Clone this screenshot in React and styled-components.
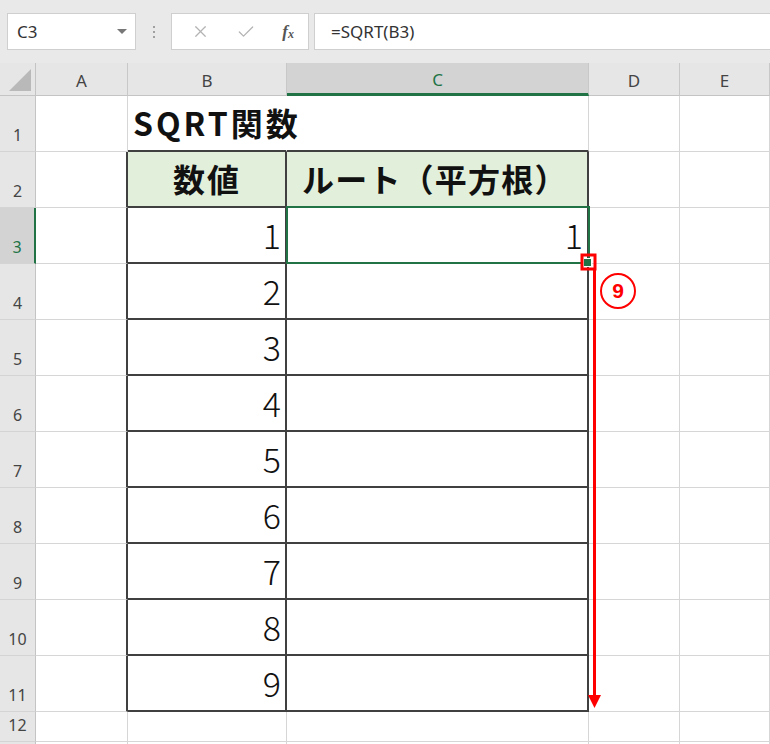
import React from "react";
import styled, { createGlobalStyle } from "styled-components";
import { X, Check } from "lucide-react";

const GlobalStyle = createGlobalStyle`
  html, body {
    margin: 0;
    padding: 0;
    width: 770px;
    height: 744px;
    overflow: hidden;
    background: #ffffff;
    font-family: "Noto Sans", "Open Sans", sans-serif;
  }
`;

const GREEN = "#217346";
const GRID = "#d6d6d6";
const DARK = "#404040";
const HEAD_BG = "#e6e6e6";

const Page = styled.div`
  display: flex;
  flex-direction: column;
  width: 770px;
  height: 744px;
`;

const Toolbar = styled.div`
  display: flex;
  align-items: center;
  height: 63px;
  padding-left: 7px;
  box-sizing: border-box;
  background: #e9e9e9;
`;

const Box = styled.div`
  display: flex;
  align-items: center;
  height: 37px;
  box-sizing: border-box;
  background: #fff;
  border: 1px solid #cfcfcf;
`;

const NameBox = styled(Box)`
  width: 129px;
  padding: 0 8px 0 9px;
  justify-content: space-between;
  font-size: 17px;
  color: #333;
`;

const Caret = styled.span`
  width: 0;
  height: 0;
  border-left: 5px solid transparent;
  border-right: 5px solid transparent;
  border-top: 5px solid #777;
`;

const Grip = styled.div`
  display: flex;
  flex-direction: column;
  gap: 3px;
  margin: 0 16px 0 17px;
  span {
    width: 2px;
    height: 2px;
    background: #a0a0a0;
  }
`;

const FxBox = styled(Box)`
  width: 138px;
  padding: 0 14px 0 19px;
  justify-content: space-between;
  color: #b3b3b3;
`;

const FxLabel = styled.span`
  font-family: "Liberation Serif", serif;
  font-style: italic;
  font-weight: bold;
  font-size: 17px;
  color: #555;
  sub {
    font-size: 12px;
    vertical-align: -1px;
  }
`;

const Formula = styled(Box)`
  flex: 1;
  margin-left: 5px;
  padding-left: 16px;
  border-right: none;
  font-size: 17px;
  color: #333;
`;

const Sheet = styled.div`
  position: relative;
  flex: 1;
  display: grid;
  grid-template-columns: 36px 92px 159px 302px 91px 1fr;
  grid-template-rows: 33px repeat(11, 56px) 30px 1fr;
  overflow: hidden;
`;

const Corner = styled.div`
  display: flex;
  align-items: flex-end;
  justify-content: flex-end;
  padding: 0 4px 4px 0;
  background: ${HEAD_BG};
  border-right: 1px solid #c4c4c4;
  border-bottom: 1px solid #c4c4c4;
`;

const ColHead = styled.div`
  display: flex;
  align-items: center;
  justify-content: center;
  box-sizing: border-box;
  padding-top: 2px;
  font-size: 17px;
  background: ${(p) => (p.$active ? "#d3d3d3" : HEAD_BG)};
  color: ${(p) => (p.$active ? GREEN : "#444")};
  border-right: 1px solid #c8c8c8;
  border-bottom: ${(p) => (p.$active ? `3px solid ${GREEN}` : "1px solid #c4c4c4")};
`;

const RowHead = styled.div`
  display: flex;
  align-items: flex-end;
  justify-content: center;
  box-sizing: border-box;
  padding-bottom: 5px;
  font-size: 16px;
  background: ${(p) => (p.$active ? "#d3d3d3" : HEAD_BG)};
  color: ${(p) => (p.$active ? GREEN : "#444")};
  border-right: ${(p) => (p.$active ? `2px solid ${GREEN}` : "1px solid #c4c4c4")};
  border-bottom: 1px solid #d4d4d4;
`;

const Cell = styled.div`
  display: flex;
  align-items: center;
  justify-content: ${(p) => p.$align || "flex-start"};
  box-sizing: border-box;
  min-width: 0;
  padding: ${(p) => p.$pad || "0 4px 2px 5px"};
  white-space: nowrap;
  font-family: "Noto Sans CJK JP", "Noto Sans", sans-serif;
  font-size: ${(p) => p.$size || 32}px;
  font-weight: ${(p) => (p.$bold ? 700 : 300)};
  letter-spacing: ${(p) => p.$spacing || 0}px;
  color: #111;
  background: ${(p) => p.$bg || "#fff"};
  border-right: ${(p) => p.$right};
  border-bottom: ${(p) => p.$bottom};
  overflow: visible;
  z-index: ${(p) => (p.$over ? 1 : 0)};
`;

const Overlay = styled.svg`
  position: absolute;
  left: 0;
  top: 0;
  pointer-events: none;
  z-index: 3;
`;

const Selection = styled.div`
  position: absolute;
  left: 286px;
  top: 143px;
  width: 304px;
  height: 58px;
  box-sizing: border-box;
  border: 2px solid ${GREEN};
  z-index: 2;
`;

const Handle = styled.div`
  position: absolute;
  left: 584px;
  top: 196px;
  width: 7px;
  height: 7px;
  background: ${GREEN};
  outline: 1px solid #fff;
  z-index: 2;
`;

const StepBadge = styled.div`
  position: absolute;
  left: 600px;
  top: 210px;
  width: 36px;
  height: 36px;
  box-sizing: border-box;
  display: flex;
  align-items: center;
  justify-content: center;
  border: 2.5px solid #ff0000;
  border-radius: 50%;
  background: #fff;
  color: #ff0000;
  font-family: "Liberation Sans", Arial, sans-serif;
  font-weight: bold;
  font-size: 21px;
  z-index: 3;
`;

const COLS = ["A", "B", "C", "D", "E"];
const values = [null, null, 1, 2, 3, 4, 5, 6, 7, 8, 9];

const inTable = (r, c) => r >= 2 && r <= 11 && (c === 1 || c === 2);

function cellBorders(r, c) {
  const dark = `2px solid ${DARK}`;
  const light = `1px solid ${GRID}`;
  let right = inTable(r, c) || inTable(r, c + 1) ? dark : light;
  if (r === 1 && c === 1) right = "1px solid transparent";
  const bottom = inTable(r, c) || inTable(r + 1, c) ? dark : light;
  return { right, bottom };
}

function cellContent(r, c) {
  if (r === 1 && c === 1)
    return { text: "SQRT関数", bold: true, over: true, size: 32, spacing: 3 };
  if (r === 2 && c === 1)
    return { text: "数値", bold: true, align: "center", bg: "#e2efda", spacing: 2 };
  if (r === 2 && c === 2)
    return {
      text: "ルート（平方根）",
      bold: true,
      bg: "#e2efda",
      pad: "0 4px 2px 15px",
      spacing: 1.2,
    };
  if (c === 1 && values[r - 1] != null)
    return { text: values[r - 1], align: "flex-end", size: 34 };
  if (r === 3 && c === 2) return { text: 1, align: "flex-end", size: 34 };
  return { text: "" };
}

function Row({ r }) {
  return (
    <>
      <RowHead $active={r === 3}>{r <= 12 ? r : ""}</RowHead>
      {COLS.map((col, c) => {
        const b = cellBorders(r, c);
        const info = cellContent(r, c);
        return (
          <Cell
            key={col}
            $right={b.right}
            $bottom={b.bottom}
            $align={info.align}
            $bold={info.bold}
            $bg={info.bg}
            $over={info.over}
            $size={info.size}
            $spacing={info.spacing}
            $pad={info.pad}
          >
            {info.text}
          </Cell>
        );
      })}
    </>
  );
}

export default function App() {
  const rows = Array.from({ length: 13 }, (_, i) => i + 1);
  return (
    <Page>
      <GlobalStyle />
      <Toolbar>
        <NameBox>
          C3
          <Caret />
        </NameBox>
        <Grip>
          <span />
          <span />
          <span />
        </Grip>
        <FxBox>
          <X size={19} strokeWidth={1.5} />
          <Check size={20} strokeWidth={1.5} />
          <FxLabel>
            f<sub>x</sub>
          </FxLabel>
        </FxBox>
        <Formula>=SQRT(B3)</Formula>
      </Toolbar>
      <Sheet>
        <Corner>
          <svg width="22" height="22" viewBox="0 0 22 22">
            <polygon points="22,0 22,22 0,22" fill="#b9b9b9" />
          </svg>
        </Corner>
        {COLS.map((col) => (
          <ColHead key={col} $active={col === "C"}>
            {col}
          </ColHead>
        ))}
        {rows.map((r) => (
          <Row key={r} r={r} />
        ))}
        <Selection />
        <Handle />
        <Overlay width="770" height="681">
          <rect x="582" y="192" width="13" height="14" fill="none" stroke="#ff0000" strokeWidth="3" />
          <line x1="594.5" y1="206" x2="594.5" y2="634" stroke="#ff0000" strokeWidth="3" />
          <polygon points="588,632 601,632 594.5,645" fill="#ff0000" />
        </Overlay>
        <StepBadge>9</StepBadge>
      </Sheet>
    </Page>
  );
}
